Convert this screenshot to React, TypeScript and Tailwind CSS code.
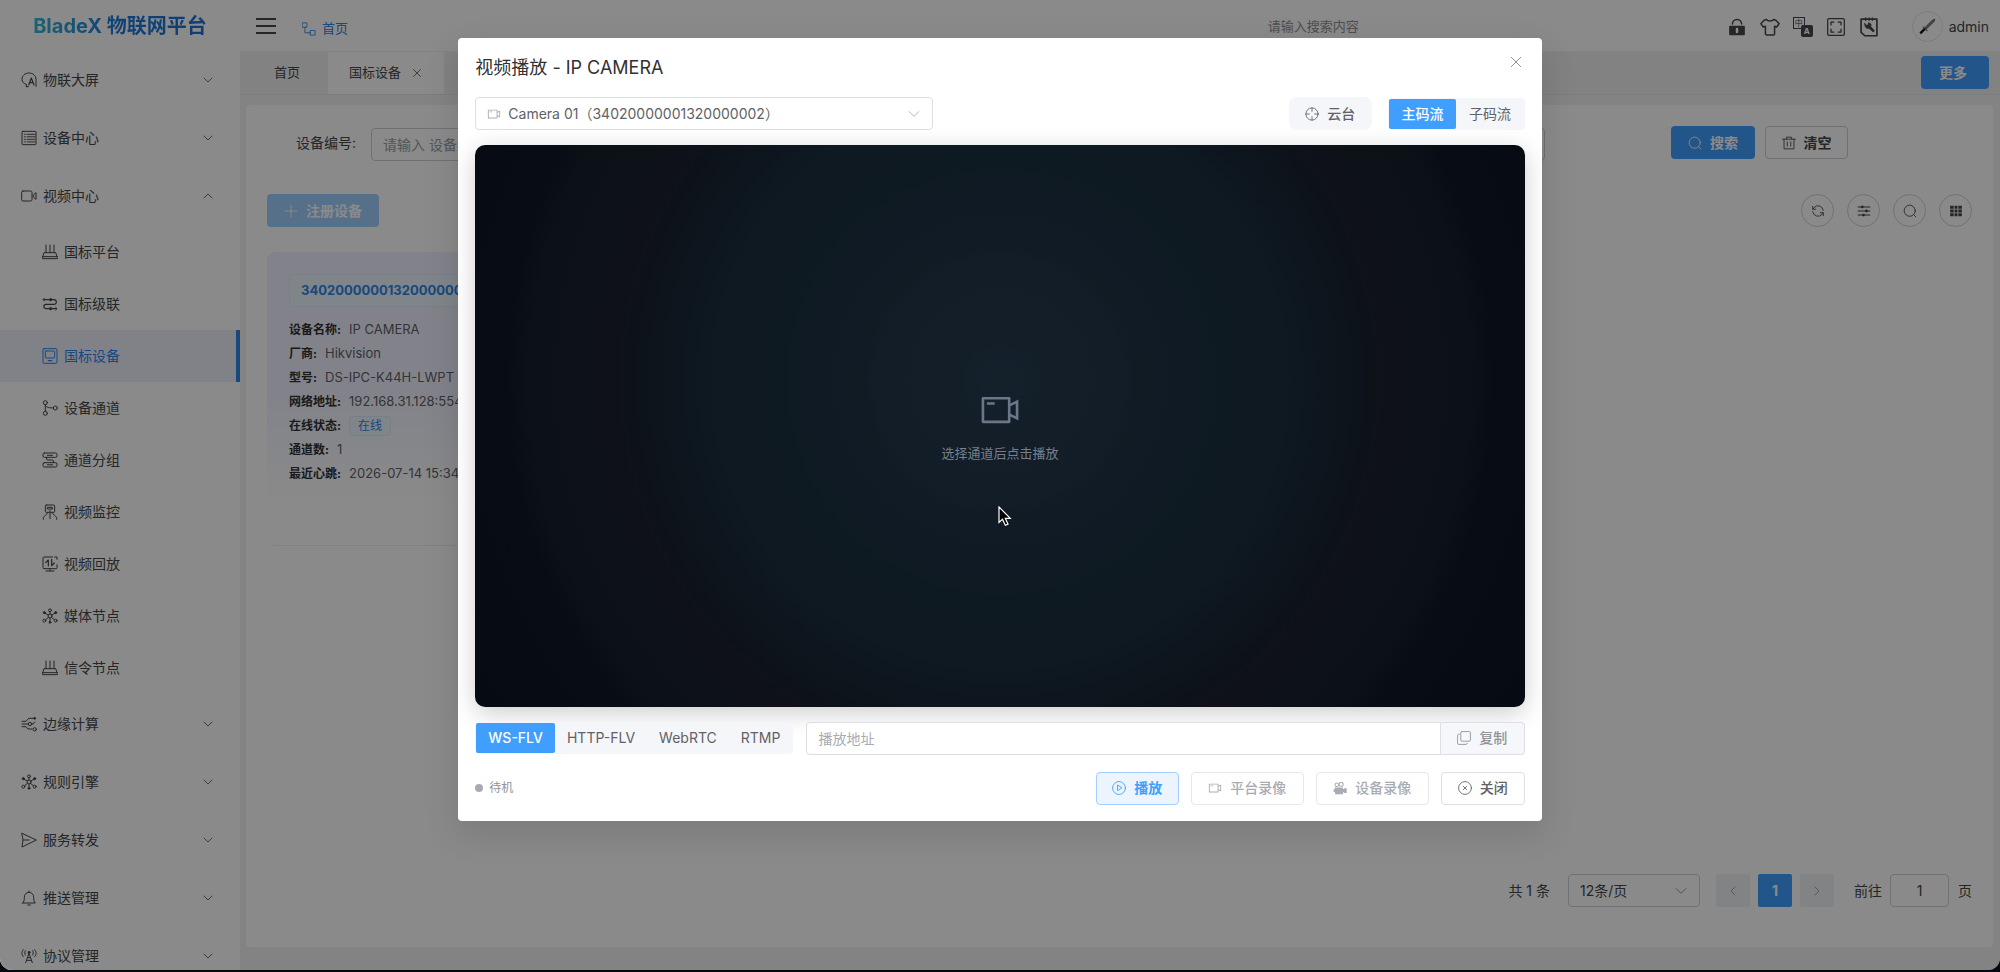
import React, { useState } from 'react';

type IconProps = { className?: string };

const Line: React.FC<IconProps & { children: React.ReactNode; width?: number }> = ({ className = 'size-4', children, width = 1.5 }) => (
    <svg viewBox="0 0 24 24" fill="none" stroke="currentColor" strokeWidth={width} strokeLinecap="round" strokeLinejoin="round" className={`shrink-0 ${className}`} aria-hidden="true">
        {children}
    </svg>
);

const ChevronIcon = ({ className }: IconProps) => <Line className={className}><path d="M4 8l8 8 8-8" /></Line>;
const CloseIcon = ({ className }: IconProps) => <Line className={className}><path d="M5 5l14 14M19 5L5 19" /></Line>;
const SearchIcon = ({ className }: IconProps) => <Line className={className}><circle cx="11.5" cy="11.5" r="9.5" /><path d="M18.500 18.500l3.500 3.500" /></Line>;
const CameraIcon = ({ className = 'size-4' }: IconProps) => (
    <svg viewBox="0 0 1024 1024" fill="currentColor" className={`shrink-0 ${className}`} aria-hidden="true">
        <path d="M704 768V256H128v512zm64-416 192-96v512l-192-96v128a32 32 0 0 1-32 32H96a32 32 0 0 1-32-32V224a32 32 0 0 1 32-32h640a32 32 0 0 1 32 32zm0 71.552v176.896l128 64V359.552zM192 320h192v64H192z" />
    </svg>
);

// Sidebar icons
const menuIcons: Record<string, React.ReactNode> = {
    screen: <><path d="M8 22v-3.500C4.500 17.500 1.500 15 1.500 11C1.500 5.500 6 1.500 12 1.500S22.500 5.500 22.500 11v10.500M8 22h3" /><path d="M11.500 19.500L15.500 9l4 10.500M13 16h5" strokeWidth="1.800" /></>,
    list: <><rect x="1.500" y="2" width="21" height="20" rx="1" /><path d="M5 6.500h1.500M9 6.500h12M5 10.200h1.500M9 10.200h12M5 14h1.500M9 14h12M5 17.800h1.500M9 17.800h12" strokeWidth="1.400" /></>,
    video: <><rect x="1" y="4.500" width="15.500" height="15" rx="2" /><path d="M19 10l3.500-3v10L19 14z" /></>,
    platform: <><path d="M6 1.500V13M12 1.500V13M18 1.500V13M3.500 13h17l2.500 7v2H1v-2zM1 19h22" /></>,
    cascade: <><path d="M3 5.500h9M15 5.500h3a3.500 3.500 0 0 1 0 7H6a3 3 0 0 0 0 6.500h6M15 19h6" strokeWidth="1.800" /><circle cx="13" cy="5.500" r="1.800" fill="currentColor" /><path d="M3.500 3.500L1.500 5.500l2 2M20.500 17l2 2-2 2" /><circle cx="13" cy="19" r="1.800" fill="currentColor" /></>,
    device: <><rect x="1.500" y="1" width="21" height="22" rx="1.500" /><rect x="5" y="4.500" width="14" height="10.500" rx="1" /><path d="M9.500 19h5" strokeWidth="2" /></>,
    branch: <><circle cx="5" cy="4" r="3" /><circle cx="5" cy="20" r="3" /><circle cx="20" cy="12" r="3" /><path d="M5 7v10M5 8c1 4 7 3.500 12 4" /></>,
    group: <><rect x="1.500" y="1.500" width="21" height="6.500" rx="2" /><rect x="1.500" y="16" width="21" height="6.500" rx="2" /><path d="M8 5h8M8 19.200h8" /><path d="M7 8v2.500c0 1 .5 1.500 1.500 1.500h7c1 0 1.500.5 1.500 1.500V16" /></>,
    monitor: <><rect x="5" y="1.500" width="14" height="11" rx="1.500" /><path d="M8.500 5h7v2.500h-7zM12 10v12M8 13.500c-1 3-4 4-6 6.500V23M16 13.500c1 3 4 4 6 6.500V23" /></>,
    playback: <><path d="M16 1.500H3a1.500 1.500 0 0 0-1.500 1.500v14.500A1.500 1.500 0 0 0 3 19h18a1.500 1.500 0 0 0 1.500-1.500V13M19 1.500h3.500V5M12 19v3.500M6 22.500h12" /><path d="M9.500 15V6L5.500 10M14.500 5v9.500l4-4" strokeWidth="1.800" /></>,
    hub: <><circle cx="12" cy="12" r="3" /><circle cx="12" cy="3.500" r="2.200" /><circle cx="3.500" cy="19" r="2.200" /><circle cx="20.500" cy="19" r="2.200" /><circle cx="3.500" cy="7" r="1.600" fill="currentColor" /><circle cx="20.500" cy="7" r="1.600" fill="currentColor" /><circle cx="12" cy="21.500" r="1.400" fill="currentColor" /><path d="M12 6v3M9.500 10.500L4 7.500M14.500 10.500L20 7.500M9.800 14L5.500 17.500M14.200 14l4.300 3.500M12 15v6" /></>,
    edge: <><path d="M1.500 8h6l4-4.500h8M1.500 12h9M1.500 16h6l3 3.500h6M16.500 12h2l2-3" /><circle cx="13.500" cy="12" r="2.500" /><circle cx="20.500" cy="20" r="2.500" /><circle cx="20.500" cy="3.500" r="1.400" fill="currentColor" /></>,
    send: <><path d="M1.500 2l21.500 10L1.500 22.500l1.500-10.500zM3 12h9" /></>,
    bell: <><path d="M12 1.500v2M2.500 19.500h19c-2-2-2.500-4-2.500-8.500 0-4.500-3-7.500-7-7.500s-7 3-7 7.500c0 4.500-.5 6.500-2.500 8.500zM10 22.500h4" /></>,
    tower: <><path d="M12 8L7 22M12 8l5 14M10 14.500h4M8.500 18.500h7" /><circle cx="12" cy="6.500" r="1.500" fill="currentColor" /><path d="M6.500 4c-1.200 2-1.200 4.500 0 6.500M17.500 4c1.200 2 1.200 4.500 0 6.500M3.500 2.500C.5 6 .5 10 3.500 13M20.500 2.500c3 3.500 3 7.500 0 10.500" /></>
};

const MenuIcon = ({ name }: { name: string }) => <Line className="size-4">{menuIcons[name]}</Line>;

const menus = [
    { label: '物联大屏', icon: 'screen' },
    { label: '设备中心', icon: 'list' },
    {
        label: '视频中心', icon: 'video', children: [
            { label: '国标平台', icon: 'platform' },
            { label: '国标级联', icon: 'cascade' },
            { label: '国标设备', icon: 'device' },
            { label: '设备通道', icon: 'branch' },
            { label: '通道分组', icon: 'group' },
            { label: '视频监控', icon: 'monitor' },
            { label: '视频回放', icon: 'playback' },
            { label: '媒体节点', icon: 'hub' },
            { label: '信令节点', icon: 'platform' }
        ]
    },
    { label: '边缘计算', icon: 'edge' },
    { label: '规则引擎', icon: 'hub' },
    { label: '服务转发', icon: 'send' },
    { label: '推送管理', icon: 'bell' },
    { label: '协议管理', icon: 'tower' }
];

const deviceInfo = [
    { label: '设备名称', value: 'IP CAMERA' },
    { label: '厂商', value: 'Hikvision' },
    { label: '型号', value: 'DS-IPC-K44H-LWPT' },
    { label: '网络地址', value: '192.168.31.128:554' },
    { label: '在线状态', value: '在线', tag: true },
    { label: '通道数', value: '1' },
    { label: '最近心跳', value: '2026-07-14 15:34:20' }
];

const Sidebar: React.FC = () => (
    <aside className="flex w-60 shrink-0 flex-col overflow-hidden bg-white">
        <div className="flex h-[51px] shrink-0 items-center justify-center">
            <span className="bg-linear-to-r from-[#35b5d8] via-[#2079d6] to-[#1f70d8] bg-clip-text text-xl leading-7 font-bold text-transparent">BladeX 物联网平台</span>
        </div>
        <nav>
            {menus.map(menu => (
                <div key={menu.label}>
                    <button className="flex h-[58px] w-full items-center gap-1.5 pr-[26px] pl-[21px] text-sm text-[#45474b]">
                        <MenuIcon name={menu.icon} />
                        <span className="flex-1 text-left">{menu.label}</span>
                        <ChevronIcon className={menu.children ? 'size-3 rotate-180' : 'size-3'} />
                    </button>
                    {menu.children && (
                        <div className="py-px">
                            {menu.children.map(item => (
                                <a
                                    key={item.label}
                                    href="#"
                                    className={`flex h-[52px] items-center gap-1.5 pl-[42px] text-sm ${item.icon === 'device'
                                        ? 'border-r-4 border-[#2e86e8] bg-[#ecf0fc] text-[#2e86e8]'
                                        : 'text-[#45474b]'
                                        }`}
                                >
                                    <MenuIcon name={item.icon} />
                                    {item.label}
                                </a>
                            ))}
                        </div>
                    )}
                </div>
            ))}
        </nav>
    </aside>
);

const TopBar: React.FC = () => (
    <header className="flex h-[51px] shrink-0 items-center bg-white pr-[11px] pl-4 text-[#45474b]">
        <button aria-label="折叠菜单" className="flex w-5 flex-col gap-[5px]">
            <span className="h-0.5 bg-[#45474b]" />
            <span className="h-0.5 bg-[#45474b]" />
            <span className="h-0.5 bg-[#45474b]" />
        </button>
        <a href="#" className="ml-[26px] flex items-center gap-1.5 pt-1.5 text-[13px] text-[#2e86e8]">
            <Line className="size-3.5"><rect x="1" y="1.500" width="7.500" height="7.500" /><rect x="14.500" y="14.500" width="8" height="8" /><path d="M5 9v9.500h9.500" /></Line>
            首页
        </a>
        <div className="flex flex-1 justify-end">
            <input aria-label="搜索" placeholder="请输入搜索内容" className="mt-0.5 w-[459px] bg-transparent text-[13px] outline-none placeholder:text-[#8d9095]" />
        </div>
        <div className="flex items-center gap-[13px] pt-0.5">
            <button aria-label="锁屏">
                <Line className="size-5" width={1.800}><path d="M6.500 8.500a5.500 5.500 0 0 1 11 0" /><path d="M3.500 11.500h17V21h-17z" fill="currentColor" /><path d="M12 14.500v3.500" stroke="#fff" strokeWidth="3" /></Line>
            </button>
            <button aria-label="主题">
                <Line className="size-5" width={1.800}><path d="M8 3c1 2.500 7 2.500 8 0l3 1 4 4-3 4-2.500-1V20a1.500 1.500 0 0 1-1.500 1.500H8A1.500 1.500 0 0 1 6.500 20v-9L4 12 1 8l4-4z" /></Line>
            </button>
            <button aria-label="语言" className="relative size-5">
                <span className="absolute top-0 left-0 flex size-3 items-center justify-center border border-[#45474b] text-[8px] leading-none">中</span>
                <span className="absolute right-0 bottom-0 flex size-3 items-center justify-center rounded-xs bg-[#45474b] text-[8px] leading-none font-bold text-white">A</span>
            </button>
            <button aria-label="全屏">
                <Line className="size-5"><rect x="2" y="2" width="20" height="20" rx="1.500" /><path d="M6 9.500V6h3.500M14.500 6H18v3.500M18 14.500V18h-3.500M9.500 18H6v-3.500" /></Line>
            </button>
            <button aria-label="工具">
                <Line className="size-5"><path d="M2.500 2.500h19v20H7l-4.500-4z" strokeWidth="2" /><path d="M8 1v3M12 1v3M16 1v3" /><path d="M7 8l2 2 2-.5.5-2.500c3 .5 3.500 2.500 2.500 4.500l4.500 5-1.500 1.500-5-4.500c-3 1-5.500-2-5-5.500z" fill="currentColor" strokeWidth="1" /></Line>
            </button>
            <div className="ml-5 flex items-center gap-1.5">
                <span className="flex size-[31px] items-center justify-center rounded-full border border-[#e6e6e6]">
                    <svg viewBox="0 0 24 24" className="size-[18px]" aria-hidden="true">
                        <path d="M9 13L19 3l3.500-1.500L21 5 11 15z" fill="#888" stroke="#444" />
                        <path d="M6.500 11.500l6 6" stroke="#666" strokeWidth="1.500" />
                        <path d="M9 14.500L3 20.500" stroke="#111" strokeWidth="3" />
                    </svg>
                </span>
                <span className="text-sm">admin</span>
            </div>
        </div>
    </header>
);

const TabBar: React.FC = () => (
    <div className="flex h-11 shrink-0 items-center justify-between border-b border-[#e4e5e8] bg-[#f0f0f0] pr-[11px] text-[13px] text-[#45474b]">
        <div className="flex h-full items-end">
            <button className="h-[42px] w-[88px] pl-1.5">首页</button>
            <button className="flex h-[42px] w-[116px] items-center justify-center gap-2.5 bg-white">
                国标设备
                <CloseIcon className="size-3" />
            </button>
        </div>
        <button className="h-[33px] rounded bg-[#409eff] pr-[22px] pl-[18px] text-sm font-bold text-white">更多</button>
    </div>
);

const DeviceCard: React.FC = () => (
    <div className="flex h-[294px] w-[360px] flex-col rounded-lg border-b border-[#eef0f3] bg-linear-to-b from-[#f0f3ff] from-50% to-white to-85% px-[22px] pt-[22px]">
        <div className="flex h-[33px] items-center rounded border border-[#d9ecff] bg-[#ecf5ff] px-[11px] text-[13px] font-bold text-[#2e86e8]">34020000001320000001</div>
        <dl className="mt-[11px] text-xs">
            {deviceInfo.map(row => (
                <div key={row.label} className="flex h-6 items-center gap-2 whitespace-nowrap">
                    <dt className="font-bold text-[#303133]">{row.label}:</dt>
                    <dd className={row.tag ? 'flex h-5 items-center rounded border border-[#d9ecff] bg-[#ecf5ff] px-2 text-[#2e86e8]' : 'text-[13px] text-[#606266]'}>{row.value}</dd>
                </div>
            ))}
        </dl>
    </div>
);

const RoundButton: React.FC<{ label: string; children: React.ReactNode }> = ({ label, children }) => (
    <button aria-label={label} className="flex size-[33px] items-center justify-center rounded-full border border-[#cfd1d6]">{children}</button>
);

const DevicePage: React.FC = () => (
    <main className="mt-2.5 mr-[7px] mb-[23px] ml-1.5 flex flex-1 flex-col rounded bg-white px-[21px] pt-[21px] pb-10 text-sm text-[#45474b]">
        <div className="flex items-start">
            <label htmlFor="deviceNo" className="mr-[15px] ml-[29px] leading-[34px]">设备编号:</label>
            <input id="deviceNo" placeholder="请输入 设备编号" className="mt-0.5 mr-[126px] h-[33px] flex-1 rounded border border-[#cfd1d6] px-[11px] outline-none placeholder:text-[#9a9da3]" />
            <button className="flex h-[33px] w-[84px] items-center justify-center gap-2 rounded bg-[#409eff] font-bold text-white">
                <SearchIcon className="size-3.5" />
                搜索
            </button>
            <button className="mr-[124px] ml-2.5 flex h-[33px] w-[83px] items-center justify-center gap-2 rounded border border-[#cfd1d6] font-bold">
                <Line className="size-3.5"><path d="M1 5.500h22M7.500 5V2h9v3M3.500 5.500V22h17V5.500M9 10v7.500M15 10v7.500" /></Line>
                清空
            </button>
        </div>
        <div className="mt-[33px] flex items-center justify-between">
            <button className="flex h-[33px] w-28 items-center justify-center gap-2 rounded bg-[#a0cfff] font-bold text-white">
                <Line className="size-3.5"><path d="M12 2v20M2 12h20" /></Line>
                注册设备
            </button>
            <div className="flex gap-[13px]">
                <RoundButton label="刷新">
                    <Line className="size-3.5"><path d="M21 11A9 9 0 0 0 5 6.500L3 9M3 4v5h5M3 13a9 9 0 0 0 16 4.500l2-2.500M21 20v-5h-5" /></Line>
                </RoundButton>
                <RoundButton label="列设置">
                    <Line className="size-3.5" width={1.800}><path d="M2 5h20M2 12h20M2 19h20" /><circle cx="9" cy="5" r="1.500" fill="currentColor" /><circle cx="16" cy="12" r="1.500" fill="currentColor" /><circle cx="11" cy="19" r="1.500" fill="currentColor" /></Line>
                </RoundButton>
                <RoundButton label="查询"><SearchIcon className="size-3.5" /></RoundButton>
                <RoundButton label="网格">
                    <svg viewBox="0 0 24 24" fill="currentColor" className="size-3.5" aria-hidden="true">
                        <path d="M2 3h6v5H2zM9.500 3h5v5h-5zM16 3h6v5h-6zM2 9.500h6v5H2zM9.500 9.500h5v5h-5zM16 9.500h6v5h-6zM2 16h6v5H2zM9.500 16h5v5h-5zM16 16h6v5h-6z" />
                    </svg>
                </RoundButton>
            </div>
        </div>
        <div className="mt-[25px] flex-1"><DeviceCard /></div>
        <div className="flex items-center justify-end">
            <span>共 1 条</span>
            <div className="relative ml-[18px]">
                <select aria-label="每页条数" className="h-[33px] w-[132px] appearance-none rounded border border-[#cfd1d6] px-[11px]">
                    <option>12条/页</option>
                </select>
                <ChevronIcon className="pointer-events-none absolute top-2.5 right-3 size-3.5 text-[#85888e]" />
            </div>
            <button aria-label="上一页" className="ml-4 flex h-[33px] w-[34px] items-center justify-center rounded-xs bg-[#f0f2f5] text-[#85888e]"><ChevronIcon className="size-3 rotate-90" /></button>
            <button className="ml-2 h-[33px] w-[34px] rounded-xs bg-[#409eff] font-bold text-white">1</button>
            <button aria-label="下一页" className="ml-2 flex h-[33px] w-[34px] items-center justify-center rounded-xs bg-[#f0f2f5] text-[#85888e]"><ChevronIcon className="size-3 -rotate-90" /></button>
            <label htmlFor="jumper" className="mr-2 ml-5">前往</label>
            <input id="jumper" defaultValue="1" className="mr-[9px] h-[33px] w-[59px] rounded border border-[#cfd1d6] text-center outline-none" />
            <span>页</span>
        </div>
    </main>
);

const protocols = ['WS-FLV', 'HTTP-FLV', 'WebRTC', 'RTMP'];
const streams = ['主码流', '子码流'];

const Segmented: React.FC<{ options: string[]; value: string; onChange: (value: string) => void; className?: string }> = ({ options, value, onChange, className = '' }) => (
    <div className={`flex h-8 items-center rounded bg-[#f5f6fa] px-px ${className}`}>
        {options.map(option => (
            <button
                key={option}
                onClick={() => onChange(option)}
                className={`h-[30px] grow rounded-xs px-3 text-sm ${value === option ? 'bg-[#409eff] font-medium text-white' : 'text-[#606266]'}`}
            >
                {option}
            </button>
        ))}
    </div>
);

const PlayerDialog: React.FC = () => {
    const [stream, setStream] = useState('主码流');
    const [protocol, setProtocol] = useState('WS-FLV');

    return (
        <div role="dialog" aria-labelledby="dialogTitle" className="mt-[38px] w-13/24 self-start rounded bg-white px-[17px] pb-4 shadow-[0_12px_32px_4px_rgba(0,0,0,0.1)]">
            <div className="flex h-[59px] items-center justify-between pr-px">
                <h2 id="dialogTitle" className="text-lg text-[#303133]">视频播放 - IP CAMERA</h2>
                <button aria-label="关闭弹窗" className="mb-3 text-[#909399]"><CloseIcon className="size-4" /></button>
            </div>

            <div className="flex h-[33px] items-center">
                <div className="relative">
                    <CameraIcon className="pointer-events-none absolute top-2.5 left-3 size-3.5 text-[#a8abb2]" />
                    <select aria-label="通道" className="h-[33px] w-[458px] appearance-none rounded border border-[#dcdfe6] pr-8 pl-8 text-sm text-[#606266]">
                        <option>Camera 01（34020000001320000002）</option>
                    </select>
                    <ChevronIcon className="pointer-events-none absolute top-2.5 right-3 size-3.5 text-[#a8abb2]" />
                </div>
                <button className="mr-4 ml-auto flex h-[33px] w-[83px] items-center justify-center gap-2 rounded-lg bg-[#f5f6fa] text-sm font-medium text-[#606266]">
                    <Line className="size-3.5"><circle cx="12" cy="12" r="10.500" /><path d="M12 1.500v6M12 16.500v6M1.500 12h6M16.500 12h6" /></Line>
                    云台
                </button>
                <Segmented options={streams} value={stream} onChange={setStream} className="w-[137px]" />
            </div>

            <div className="mt-[15px] flex aspect-[1050/562] flex-col items-center justify-center rounded-[10px] bg-[radial-gradient(circle_at_50%_42%,#14212b_0%,#131e29_7%,#121d28_20%,#101b24_22%,#101a24_30%,#0e1a22_36%,#0e1921_46%,#0d151d_54%,#0d1219_60%,#0f111a_63%,#0d1118_66%,#0c1017_76%,#080d15_80%,#060a12_100%)] text-[#6b7788] shadow-[0_6px_24px_rgba(0,0,0,0.2)]">
                <CameraIcon className="size-[42px]" />
                <p className="mt-3 text-[13px] leading-5 text-[#75808f]">选择通道后点击播放</p>
            </div>

            <div className="mt-[15px] flex items-center gap-[13px]">
                <Segmented options={protocols} value={protocol} onChange={setProtocol} />
                <div className="flex flex-1">
                    <input aria-label="播放地址" placeholder="播放地址" readOnly className="h-[33px] min-w-0 flex-1 rounded-l border border-[#dcdfe6] bg-white px-[11px] text-sm outline-none placeholder:text-[#a8abb2]" />
                    <button className="flex h-[33px] w-[84px] items-center justify-center gap-2 rounded-r border border-l-0 border-[#dcdfe6] bg-[#f5f7fa] text-sm font-medium text-[#909399]">
                        <Line className="size-3.5"><rect x="6.500" y="1" width="16.500" height="16.500" rx="2" /><path d="M4 5.500H3A2 2 0 0 0 1 7.500V21a2 2 0 0 0 2 2h12.500a2 2 0 0 0 2-2" /></Line>
                        复制
                    </button>
                </div>
            </div>

            <div className="mt-[17px] flex items-center gap-3 text-sm font-medium">
                <div className="mr-auto flex items-center gap-1.5 text-xs font-normal text-[#909399]">
                    <span className="size-2 rounded-full bg-[#a8abb2]" />
                    待机
                </div>
                <button className="flex h-[33px] w-[83px] items-center justify-center gap-2 rounded border border-[#a0cfff] bg-[#ecf5ff] font-bold text-[#409eff]">
                    <Line className="size-3.5"><circle cx="12" cy="12" r="11" /><path d="M9.500 7.500v9l7-4.500z" /></Line>
                    播放
                </button>
                <button disabled className="flex h-[33px] w-[113px] items-center justify-center gap-2 rounded border border-[#e4e7ed] text-[#a8abb2]">
                    <CameraIcon className="size-3.5" />
                    平台录像
                </button>
                <button disabled className="flex h-[33px] w-[113px] items-center justify-center gap-2 rounded border border-[#e4e7ed] text-[#a8abb2]">
                    <svg viewBox="0 0 24 24" fill="currentColor" className="size-3.5" aria-hidden="true">
                        <path d="M3 11h14v3l3-1.500h3.500v8H20L17 19v3.500H3.500V19H1v-5h2z" />
                        <circle cx="6.500" cy="6.500" r="3" fill="none" stroke="currentColor" strokeWidth="1.800" />
                        <circle cx="14" cy="5.500" r="3.500" fill="none" stroke="currentColor" strokeWidth="1.800" />
                    </svg>
                    设备录像
                </button>
                <button className="flex h-[33px] w-[84px] items-center justify-center gap-2 rounded border border-[#dcdfe6] text-[#606266]">
                    <Line className="size-3.5"><circle cx="12" cy="12" r="11" /><path d="M9 9l6 6M15 9l-6 6" /></Line>
                    关闭
                </button>
            </div>
        </div>
    );
};

const App: React.FC = () => (
    <div className="h-screen bg-[#05090f] pb-0.5 font-['Inter','Noto_Sans_CJK_SC',sans-serif]">
        <div className="relative flex h-full overflow-hidden rounded-b-xl bg-[#f3f3f4]">
            <Sidebar />
            <div className="flex min-w-0 flex-1 flex-col">
                <TopBar />
                <TabBar />
                <DevicePage />
            </div>

            {/* Mask and dialog */}
            <div className="absolute inset-0 flex justify-center bg-black/46">
                <PlayerDialog />
                <svg viewBox="0 0 14 21" className="absolute top-[506px] left-1/2 -ml-0.5 h-[21px] w-3.5" aria-hidden="true">
                    <path d="M1 1v15.500l3.500-3.200 2.800 6 2.700-1.200-2.700-5.800h5z" fill="#000" stroke="#fff" strokeWidth="1.200" />
                </svg>
            </div>
        </div>
    </div>
);

export default App;
